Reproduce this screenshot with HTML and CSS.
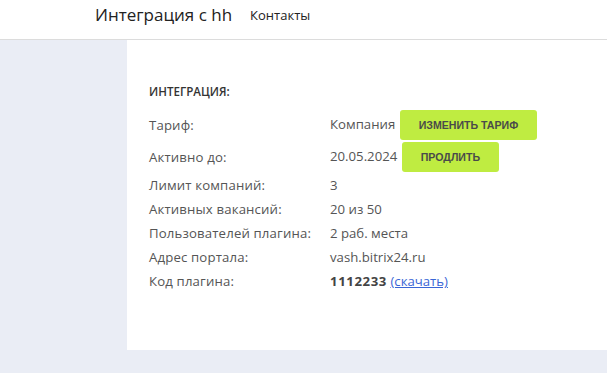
FILE: index.html
```html
<!DOCTYPE html>
<html lang="ru">
<head>
    <title>Интеграция с hh</title>
    <meta charset="UTF-8">
    <link rel="stylesheet" href="styles.css">
</head>
<body>
    <header class="top-bar">
        <span class="site-title">Интеграция с hh</span>
        <a class="top-link" href="#">Контакты</a>
    </header>

    <div class="page">
        <aside class="sidebar"></aside>
        <main class="panel">
            <h2 class="panel-title">Интеграция:</h2>
            <div class="info">
                <div class="info-row tall">
                    <span class="info-label">Тариф:</span>
                    <span class="info-value">Компания <a class="btn" href="#">Изменить тариф</a></span>
                </div>
                <div class="info-row tall">
                    <span class="info-label">Активно до:</span>
                    <span class="info-value">20.05.2024 <a class="btn" href="#">Продлить</a></span>
                </div>
                <div class="info-row">
                    <span class="info-label">Лимит компаний:</span>
                    <span class="info-value">3</span>
                </div>
                <div class="info-row">
                    <span class="info-label">Активных вакансий:</span>
                    <span class="info-value">20 из 50</span>
                </div>
                <div class="info-row">
                    <span class="info-label">Пользователей плагина:</span>
                    <span class="info-value">2 раб. места</span>
                </div>
                <div class="info-row">
                    <span class="info-label">Адрес портала:</span>
                    <span class="info-value">vash.bitrix24.ru</span>
                </div>
                <div class="info-row">
                    <span class="info-label">Код плагина:</span>
                    <span class="info-value"><strong>1112233</strong> <a class="link" href="#">(скачать)</a></span>
                </div>
            </div>
        </main>
    </div>
</body>
</html>
```

FILE: styles.css
```css
* {
    margin: 0;
    padding: 0;
    box-sizing: border-box;
}

body {
    font-family: "Open Sans", "Noto Sans", sans-serif;
    font-size: 13.2px;
    color: #555;
    background-color: #eaedf5;
}

.top-bar {
    height: 40px;
    background-color: #fff;
    border-bottom: 1px solid #dcdcdc;
    display: flex;
    align-items: center;
    padding-left: 95px;
    padding-bottom: 10px;
}

.site-title {
    font-size: 17px;
    color: #222;
    margin-right: 18px;
}

.top-link {
    color: #222;
    text-decoration: none;
    font-size: 13px;
}

.page {
    display: flex;
}

.sidebar {
    width: 127px;
    flex-shrink: 0;
}

.panel {
    flex: 1;
    background-color: #fff;
    padding: 44px 22px 57px;
}

.panel-title {
    font-size: 11.6px;
    font-weight: 600;
    text-transform: uppercase;
    color: #333;
    margin-bottom: 10px;
}

.info-row {
    display: flex;
    align-items: center;
    height: 24px;
}

.info-row.tall {
    height: 32px;
}

.info-label {
    width: 181px;
    flex-shrink: 0;
    letter-spacing: 0.15px;
}

.btn {
    display: inline-block;
    vertical-align: middle;
    margin-left: 1px;
    background-color: #bfec41;
    color: #4a4a4a;
    font-family: "Liberation Sans", Arial, sans-serif;
    font-size: 10.6px;
    font-weight: bold;
    text-transform: uppercase;
    text-decoration: none;
    line-height: 30px;
    height: 30px;
    padding: 0 19px;
    border-radius: 3px;
}

.info-value strong {
    color: #444;
    letter-spacing: 0.6px;
}

.link {
    color: #3a66d6;
}
```
